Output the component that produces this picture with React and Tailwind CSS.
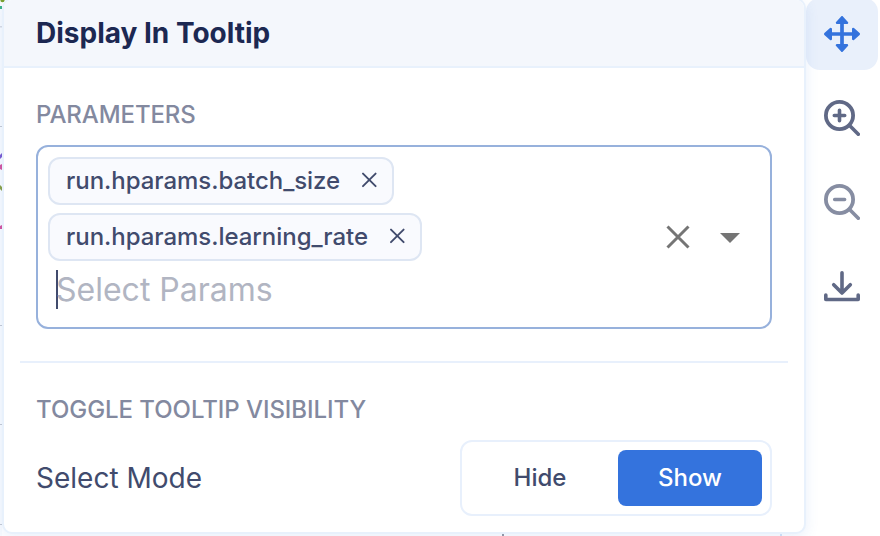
function Chip({ label, className }) {
  return (
    <div className={`flex h-12 items-center justify-between rounded-[12px] border-2 border-[#dee6f3] bg-[#f9fafe] pl-4 pr-[14px] ${className}`}>
      <span className="whitespace-nowrap text-[24px] font-medium leading-none tracking-[-0.04px] text-[#414b6d]">{label}</span>
      <svg className="mb-0.5 size-4" viewBox="0 0 16 16" fill="none" stroke="#414b6d" strokeWidth="1.9" strokeLinecap="round">
        <path d="M1 1.6 13.6 14.2M13.6 1.6 1 14.2" />
      </svg>
    </div>
  );
}

function ChartBackdrop() {
  return (
    <svg className="absolute left-0 top-0" width="880" height="536" viewBox="0 0 880 536">
      <rect width="2" height="536" fill="#f9fbfe" />
      <rect y="26" width="2" height="1.5" fill="#d8dbe3" />
      <rect y="126" width="2" height="1" fill="#c5c9d3" />
      <rect y="325" width="2" height="1" fill="#c5c9d3" />
      <rect y="424" width="2" height="1" fill="#c5c9d3" />
      <rect y="524" width="2" height="1" fill="#c5c9d3" />
      <circle cx="2.5" cy="0" r="2.2" fill="#7aa02d" />
      <rect y="6" width="2" height="3" fill="#3fb389" />
      <path d="M0 155l2-2v4l-2 2z" fill="#7a5bd0" />
      <path d="M0 165l2-1v6l-2-1z" fill="#d4559f" />
      <path d="M0 185l2 2v4l-2-2z" fill="#8aa045" />
      <path d="M0 226l2-1v4h-2z" fill="#d4559f" />
    </svg>
  );
}

function Toolbar() {
  return (
    <div className="-mt-0.5 flex w-[72px] shrink-0 flex-col gap-3">
      <div className="flex h-[72px] items-center justify-center rounded-[14px] bg-[#e9f0fb]">
        <svg className="size-9" viewBox="0 0 36 36" fill="#3473dd" stroke="#3473dd" strokeLinejoin="round" strokeLinecap="round">
          <path d="M18 6v24M6 18h24" strokeWidth="3.7" />
          <path d="M18 1.2 23 6.8H13ZM18 34.8 13 29.2H23ZM1.2 18 6.8 13V23ZM34.8 18 29.2 23V13Z" strokeWidth="2.4" />
        </svg>
      </div>
      <div className="flex h-[72px] items-center justify-center">
        <svg className="size-9" viewBox="0 0 36 36" fill="none" stroke="#606986" strokeLinecap="round">
          <circle cx="15.5" cy="15.5" r="13.6" strokeWidth="3.8" />
          <path d="M25.6 25.6 34.3 34.3M15.5 10.3v10.4M10.3 15.5h10.4" strokeWidth="3.6" />
        </svg>
      </div>
      <div className="flex h-[72px] items-center justify-center">
        <svg className="size-9" viewBox="0 0 36 36" fill="none" stroke="#868da2" strokeLinecap="round">
          <circle cx="15.5" cy="15.5" r="13.6" strokeWidth="3.8" />
          <path d="M25.6 25.6 34.3 34.3M10.7 15.5h9.9" strokeWidth="3.6" />
        </svg>
      </div>
      <div className="flex h-[72px] items-center justify-center">
        <svg className="size-9" viewBox="0 0 36 36" fill="none" stroke="#606986" strokeWidth="3.6" strokeLinecap="round" strokeLinejoin="round">
          <path d="M18 4.7V25M9.7 16.7 18 25 26.3 16.7M1.8 27v4.5h32.4V27" />
        </svg>
      </div>
    </div>
  );
}

export default function App() {
  return (
    <div className="relative h-[536px] w-[880px] overflow-hidden bg-white font-['Inter','Liberation_Sans',sans-serif]">
      <ChartBackdrop />
      <div className="relative flex items-start pl-0.5">
        <div className="z-10 -mt-0.5 flex h-[536px] w-[804px] shrink-0 flex-col rounded-[10px] border-2 border-[#e8f1fc] bg-white shadow-[0_4px_14px_rgba(52,115,221,0.11)]">
          <div className="flex h-[68px] shrink-0 items-center rounded-t-[8px] border-b-2 border-[#e8f1fc] bg-[#f4f7fc] pl-8">
            <h1 className="text-[28px] font-bold leading-none text-[#1c2852]">Display In Tooltip</h1>
          </div>
          <div className="mx-4 flex h-[295px] shrink-0 flex-col border-b-2 border-[#e8f0fc] px-4 pt-[35px]">
            <h2 className="text-[24px] font-medium leading-6 tracking-[-0.1px] text-[#83899f]">PARAMETERS</h2>
            <div className="mt-[18px] flex h-[184px] rounded-[12px] border-2 border-[#97b1dc] pl-[10px] pr-[30px] pt-[10px]">
              <div className="flex flex-1 flex-col items-start gap-2">
                <Chip className="w-[346px]" label="run.hparams.batch_size" />
                <Chip className="w-[374px]" label="run.hparams.learning_rate" />
                <div className="ml-2 mt-px flex h-[39px] items-center border-l-2 border-[#414b6d]">
                  <span className="-ml-0.5 text-[32px] leading-none text-[#b1b5c2]">Select Params</span>
                </div>
              </div>
              <div className="-mt-[10px] flex items-center gap-[30px]">
                <svg className="size-6" viewBox="0 0 24 24" stroke="#757575" strokeWidth="3">
                  <path d="M1.5 1.5 22.5 22.5M22.5 1.5 1.5 22.5" />
                </svg>
                <svg className="mt-px h-[10px] w-5" viewBox="0 0 20 10" fill="#757575">
                  <path d="M0 0h20L10 10Z" />
                </svg>
              </div>
            </div>
          </div>
          <div className="px-8 pt-[35px]">
            <h2 className="text-[24px] font-medium leading-6 tracking-[-0.05px] text-[#83899f]">TOGGLE TOOLTIP VISIBILITY</h2>
            <div className="mt-[18px] flex items-center justify-between">
              <span className="text-[28px] leading-none text-[#414b6d]">Select Mode</span>
              <div className="flex h-[76px] w-[312px] items-center justify-between rounded-[12px] border-2 border-[#e8f0fc] p-2 text-[24px] font-medium text-[#414b6d]">
                <div className="flex h-14 w-[140px] items-center justify-center">Hide</div>
                <div className="flex h-14 w-36 items-center justify-center rounded-[8px] bg-[#3473dd] text-white">Show</div>
              </div>
            </div>
          </div>
        </div>
        <Toolbar />
      </div>
      <svg className="absolute bottom-0 left-[502px] z-20" width="280" height="2" viewBox="0 0 280 2">
        <rect width="2" height="2" fill="#8f97a8" />
        <rect x="278" width="2" height="2" fill="#c9dcf5" />
      </svg>
    </div>
  );
}
